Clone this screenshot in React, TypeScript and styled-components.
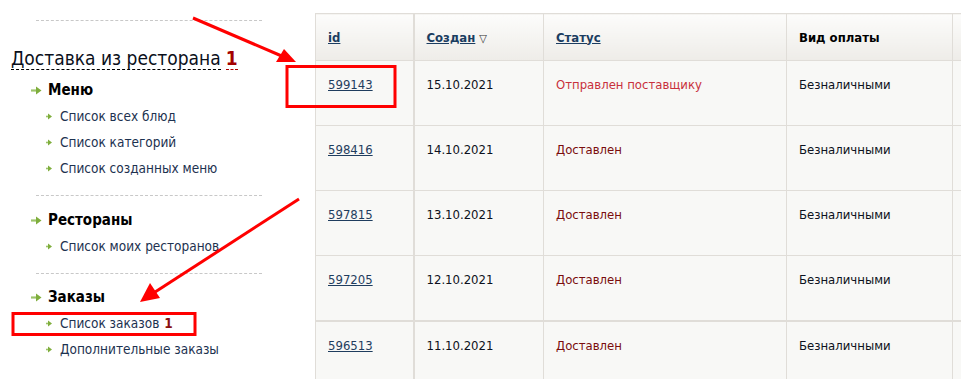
import React from "react";
import styled, { createGlobalStyle } from "styled-components";

const Global = createGlobalStyle`
  html, body { margin: 0; padding: 0; background: #fff; overflow: hidden; }
  body { font-family: "DejaVu Sans Condensed", "DejaVu Sans", Tahoma, sans-serif; font-size: 13px; color: #000; }
`;

const Page = styled.div`
  position: relative;
  display: flex;
  align-items: flex-start;
  width: 961px;
  height: 379px;
  overflow: hidden;
`;

const Sidebar = styled.div`
  flex: 0 0 315px;
  display: flex;
  flex-direction: column;
  padding-top: 20px;
`;

const Divider = styled.div<{ $mt?: number; $mb?: number }>`
  margin-left: 36px;
  width: 226px;
  border-top: 1px dashed #c8c8c8;
  margin-top: ${(p) => p.$mt ?? 0}px;
  margin-bottom: ${(p) => p.$mb ?? 0}px;
`;

const Title = styled.div`
  margin: 26px 0 10px 11px;
  font-size: 19px;
  line-height: 23px;
  color: #0a0f1a;
  white-space: nowrap;
`;

const TitleText = styled.span`
  border-bottom: 1px dashed #000;
`;

const TitleCount = styled.span`
  border-bottom: 1px dashed #a00;
  color: #a40000;
  font-weight: bold;
  margin-left: 5px;
`;

const Section = styled.div`
  display: flex;
  flex-direction: column;
`;

const Heading = styled.div`
  display: flex;
  align-items: center;
  height: 20px;
  padding-left: 31px;
  margin-bottom: 3px;
  font-size: 15px;
  font-weight: bold;
  color: #000;
  gap: 6px;
`;

const Item = styled.div`
  display: flex;
  align-items: center;
  height: 26px;
  padding-left: 46px;
  gap: 8px;
  font-size: 13.5px;
  color: #1d3250;
  white-space: nowrap;
`;

const ItemCount = styled.b`
  color: #8a1010;
  margin-left: 5px;
`;

const TableWrap = styled.div`
  flex: 0 0 auto;
  margin-top: 13px;
`;

const Table = styled.table`
  border-collapse: collapse;
  table-layout: fixed;
  width: 700px;
`;

const Th = styled.th<{ $w: number; $thick?: boolean }>`
  width: ${(p) => p.$w}px;
  height: 47px;
  box-sizing: border-box;
  padding: 0 0 0 12px;
  text-align: left;
  vertical-align: middle;
  font-weight: bold;
  font-size: 13px;
  background: linear-gradient(#fcfcfb, #eeece8);
  border: 1px solid #e0ddd8;
  border-right-width: ${(p) => (p.$thick ? 2 : 1)}px;
  white-space: nowrap;
`;

const HeadLink = styled.a`
  color: #1b3d61;
  text-decoration: underline;
`;

const SortMark = styled.span`
  font-size: 11px;
  font-weight: normal;
  color: #333;
  margin-left: 4px;
`;

const Tr = styled.tr<{ $thick?: boolean }>`
  height: 65px;
  border-bottom: ${(p) => (p.$thick ? 2 : 1)}px solid #e0ddd8;
`;

const Td = styled.td<{ $thick?: boolean }>`
  box-sizing: border-box;
  padding: 16px 0 0 12px;
  vertical-align: top;
  background: #f8f8f6;
  border-left: 1px solid #e0ddd8;
  border-right: ${(p) => (p.$thick ? 2 : 1)}px solid #e0ddd8;
  line-height: 16px;
  color: #0d1220;
  white-space: nowrap;
`;

const IdLink = styled.a`
  color: #1f3d5e;
  text-decoration: underline;
`;

const Status = styled.span<{ $sent?: boolean }>`
  color: ${(p) => (p.$sent ? "#c8303c" : "#7a0d0d")};
`;

const Overlay = styled.svg`
  position: absolute;
  left: 0;
  top: 0;
  pointer-events: none;
`;

const HeadBullet = () => (
  <svg width="11" height="9" viewBox="0 0 11 9">
    <path d="M0 4.5h6" stroke="#9cc36a" strokeWidth="2.2" />
    <path d="M5 0.5L10.5 4.5L5 8.5z" fill="#7fae3c" />
  </svg>
);

const ItemBullet = () => (
  <svg width="6" height="7" viewBox="0 0 6 7">
    <path d="M0 3.5h3" stroke="#9cc36a" strokeWidth="1.6" />
    <path d="M2 0.5L6 3.5L2 6.5z" fill="#7fae3c" />
  </svg>
);

const rows = [
  { id: "599143", date: "15.10.2021", status: "Отправлен поставщику", sent: true },
  { id: "598416", date: "14.10.2021", status: "Доставлен" },
  { id: "597815", date: "13.10.2021", status: "Доставлен" },
  { id: "597205", date: "12.10.2021", status: "Доставлен" },
  { id: "596513", date: "11.10.2021", status: "Доставлен" },
];

export default function App() {
  return (
    <>
      <Global />
      <Page>
        <Sidebar>
          <Divider />
          <Title>
            <TitleText>Доставка из ресторана</TitleText>
            <TitleCount>1</TitleCount>
          </Title>
          <Section>
            <Heading>
              <HeadBullet />
              Меню
            </Heading>
            <Item><ItemBullet />Список всех блюд</Item>
            <Item><ItemBullet />Список категорий</Item>
            <Item><ItemBullet />Список созданных меню</Item>
          </Section>
          <Divider $mt={14} $mb={14} />
          <Section>
            <Heading>
              <HeadBullet />
              Рестораны
            </Heading>
            <Item><ItemBullet />Список моих ресторанов</Item>
          </Section>
          <Divider $mt={14} $mb={13} />
          <Section>
            <Heading>
              <HeadBullet />
              Заказы
            </Heading>
            <Item>
              <ItemBullet />
              <span>Список заказов<ItemCount>1</ItemCount></span>
            </Item>
            <Item><ItemBullet />Дополнительные заказы</Item>
          </Section>
        </Sidebar>
        <TableWrap>
          <Table>
            <thead>
              <tr>
                <Th $w={98} $thick><HeadLink>id</HeadLink></Th>
                <Th $w={130}><HeadLink>Создан</HeadLink><SortMark>▽</SortMark></Th>
                <Th $w={243}><HeadLink>Статус</HeadLink></Th>
                <Th $w={166}>Вид оплаты</Th>
                <Th $w={63}></Th>
              </tr>
            </thead>
            <tbody>
              {rows.map((r, i) => (
                <Tr key={r.id} $thick={i === 3}>
                  <Td $thick><IdLink>{r.id}</IdLink></Td>
                  <Td>{r.date}</Td>
                  <Td><Status $sent={r.sent}>{r.status}</Status></Td>
                  <Td>Безналичными</Td>
                  <Td></Td>
                </Tr>
              ))}
            </tbody>
          </Table>
        </TableWrap>
        <Overlay width="961" height="379" viewBox="0 0 961 379">
          <g stroke="#f00" strokeWidth="3" fill="none">
            <rect x="287" y="66.5" width="108" height="40" />
            <rect x="13" y="313.5" width="182" height="21" />
            <line x1="193" y1="18" x2="284" y2="57" />
            <line x1="299" y1="199" x2="152" y2="294" />
          </g>
          <g fill="#f00">
            <path d="M296 62L276 62L284 49z" />
            <path d="M140 302L150 283L160 298z" />
          </g>
        </Overlay>
      </Page>
    </>
  );
}
